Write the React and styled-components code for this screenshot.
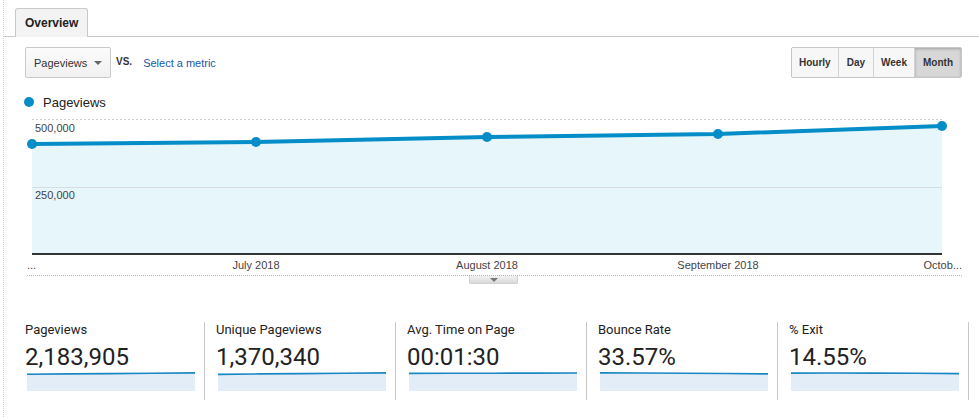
import React from 'react';
import styled, { createGlobalStyle } from 'styled-components';

const GlobalStyle = createGlobalStyle`
  html, body { margin: 0; padding: 0; background: #fff; }
  body { font-family: Arial, "Liberation Sans", sans-serif; color: #333; }
  * { box-sizing: border-box; }
`;

const Page = styled.div`
  width: 976px;
  height: 417px;
  margin-left: 3px;
  border-left: 1px dotted #cfcfcf;
  overflow: hidden;
`;

const TabBar = styled.div`
  display: flex;
  align-items: flex-end;
  height: 37px;
  padding: 8px 0 0 11px;
  border-bottom: 1px solid #c9c9c9;
`;

const Tab = styled.div`
  height: 29px;
  margin-bottom: -1px;
  padding: 0 9px;
  border: 1px solid #c9c9c9;
  border-bottom: none;
  border-radius: 3px 3px 0 0;
  background: #f3f3f3;
  font: bold 12px Arial, "Liberation Sans", sans-serif;
  line-height: 28px;
  color: #222;
`;

const Controls = styled.div`
  display: flex;
  align-items: center;
  justify-content: space-between;
  height: 31px;
  margin-top: 10px;
  padding: 0 17px 0 21px;
`;

const MetricPicker = styled.div`
  display: flex;
  align-items: center;
`;

const Dropdown = styled.div`
  display: flex;
  align-items: center;
  width: 86px;
  height: 31px;
  padding: 0 8px;
  border: 1px solid #c9c9c9;
  border-radius: 2px;
  background: linear-gradient(#fbfbfb, #f1f1f1);
  font-size: 11px;
  color: #333;
`;

const Caret = styled.span`
  margin-left: auto;
  width: 0;
  height: 0;
  border-left: 4px solid transparent;
  border-right: 4px solid transparent;
  border-top: 4px solid #666;
`;

const Vs = styled.span`
  margin-left: 5px;
  font: bold 10px Arial, "Liberation Sans", sans-serif;
  color: #333;
  position: relative;
  top: -1px;
`;

const MetricLink = styled.span`
  margin-left: 11px;
  font-size: 11px;
  color: #1b58a9;
`;

const ButtonGroup = styled.div`
  display: flex;
  height: 31px;
  border: 1px solid #c6c6c6;
  border-radius: 2px;
  overflow: hidden;
`;

const RangeButton = styled.div`
  display: flex;
  align-items: center;
  padding: 0 ${p => p.$pad}px;
  border-left: ${p => (p.$first ? 'none' : '1px solid #d2d2d2')};
  background: ${p => (p.$active ? '#d7d7d7' : '#f7f7f7')};
  box-shadow: ${p => (p.$active ? 'inset 0 1px 3px rgba(0,0,0,0.25)' : 'none')};
  font: bold 10px Arial, "Liberation Sans", sans-serif;
  color: #333;
`;

const Legend = styled.div`
  display: flex;
  align-items: center;
  gap: 9px;
  height: 16px;
  margin-top: 16px;
  padding-left: 20px;
  font-size: 13px;
  color: #222;
`;

const LegendDot = styled.span`
  width: 10px;
  height: 10px;
  border-radius: 50%;
  background: #058dc7;
`;

const ChartSvg = styled.svg`
  display: block;
  margin-top: 2px;
`;

const AxisRule = styled.div`
  display: flex;
  justify-content: center;
  margin: 0 17px 0 23px;
  border-top: 1px dotted #b3b3b3;
`;

const Handle = styled.div`
  display: flex;
  justify-content: center;
  align-items: center;
  width: 49px;
  height: 8px;
  margin-left: -2px;
  border: 1px solid #d0d0d0;
  border-top: none;
  border-radius: 0 0 2px 2px;
  background: linear-gradient(#f1f1f1, #d9d9d9);
`;

const HandleArrow = styled.span`
  width: 0;
  height: 0;
  border-left: 4px solid transparent;
  border-right: 4px solid transparent;
  border-top: 4px solid #777;
`;

const Metrics = styled.div`
  display: flex;
  margin: 38px 0 0 10px;
`;

const MetricCol = styled.div`
  width: 191px;
  height: 78px;
  padding-left: 11px;
  border-right: 1px solid #c8c8c8;
  font-family: Roboto, "Noto Sans", Arial, sans-serif;
`;

const MetricLabel = styled.div`
  font-size: 13px;
  line-height: 15px;
  color: #222;
`;

const MetricValue = styled.div`
  margin-top: 6px;
  font-size: 24px;
  line-height: 28px;
  color: #222;
`;

const Spark = styled.svg`
  display: block;
  margin: 1px 0 0 2px;
`;

const points = [
  [28, 32],
  [252, 30],
  [483, 25],
  [714, 22],
  [938, 14],
];

const xLabels = [
  { x: 252, t: 'July 2018' },
  { x: 483, t: 'August 2018' },
  { x: 714, t: 'September 2018' },
];

function Chart() {
  const line = points.map(p => p.join(',')).join(' ');
  const area = `${line} 938,142 28,142`;
  return (
    <ChartSvg width="975" height="163" viewBox="0 0 975 163">
      <polygon points={area} fill="#e7f6fb" />
      <line x1="28" y1="7.5" x2="938" y2="7.5" stroke="#cfcfcf" strokeDasharray="2 2" />
      <line x1="28" y1="75.5" x2="938" y2="75.5" stroke="#d5dde2" />
      <line x1="28" y1="142" x2="938" y2="142" stroke="#333" strokeWidth="2" />
      <g fontFamily="Arial, 'Liberation Sans', sans-serif" fontSize="11" fill="#444">
        <text x="31" y="20">500,000</text>
        <text x="31" y="87">250,000</text>
        <text x="23" y="157">...</text>
        {xLabels.map(l => (
          <text key={l.t} x={l.x} y="157" textAnchor="middle">{l.t}</text>
        ))}
        <text x="958" y="157" textAnchor="end">Octob...</text>
      </g>
      <polyline points={line} fill="none" stroke="#058dc7" strokeWidth="4" strokeLinejoin="round" />
      {points.map(([x, y]) => (
        <circle key={x} cx={x} cy={y} r="5" fill="#058dc7" />
      ))}
    </ChartSvg>
  );
}

function Sparkline({ ys }) {
  const w = 168;
  const step = w / (ys.length - 1);
  const pts = ys.map((y, i) => `${(i * step).toFixed(1)},${y}`).join(' ');
  return (
    <Spark width="168" height="19" viewBox="0 0 168 19">
      <polygon points={`${pts} 168,19 0,19`} fill="#e2edf7" />
      <polyline points={pts} fill="none" stroke="#1b87c2" strokeWidth="1.6" />
    </Spark>
  );
}

const metrics = [
  { label: 'Pageviews', value: '2,183,905', ys: [2.2, 1.9, 1.6, 1.3, 0.9] },
  { label: 'Unique Pageviews', value: '1,370,340', ys: [2.4, 1.9, 1.6, 1.3, 0.9] },
  { label: 'Avg. Time on Page', value: '00:01:30', ys: [1.4, 1.3, 1.2, 1.1, 1.0] },
  { label: 'Bounce Rate', value: '33.57%', ys: [0.9, 1.0, 1.2, 1.5, 1.9] },
  { label: '% Exit', value: '14.55%', ys: [1.1, 1.0, 1.1, 1.2, 1.6] },
];

const ranges = [
  { t: 'Hourly', pad: 7 },
  { t: 'Day', pad: 8 },
  { t: 'Week', pad: 7 },
  { t: 'Month', pad: 8, active: true },
];

export default function App() {
  return (
    <>
      <GlobalStyle />
      <Page>
        <TabBar>
          <Tab>Overview</Tab>
        </TabBar>
        <Controls>
          <MetricPicker>
            <Dropdown>
              Pageviews
              <Caret />
            </Dropdown>
            <Vs>VS.</Vs>
            <MetricLink>Select a metric</MetricLink>
          </MetricPicker>
          <ButtonGroup>
            {ranges.map((r, i) => (
              <RangeButton key={r.t} $first={i === 0} $active={r.active} $pad={r.pad}>
                {r.t}
              </RangeButton>
            ))}
          </ButtonGroup>
        </Controls>
        <Legend>
          <LegendDot />
          Pageviews
        </Legend>
        <Chart />
        <AxisRule>
          <Handle>
            <HandleArrow />
          </Handle>
        </AxisRule>
        <Metrics>
          {metrics.map(m => (
            <MetricCol key={m.label}>
              <MetricLabel>{m.label}</MetricLabel>
              <MetricValue>{m.value}</MetricValue>
              <Sparkline ys={m.ys} />
            </MetricCol>
          ))}
        </Metrics>
      </Page>
    </>
  );
}
